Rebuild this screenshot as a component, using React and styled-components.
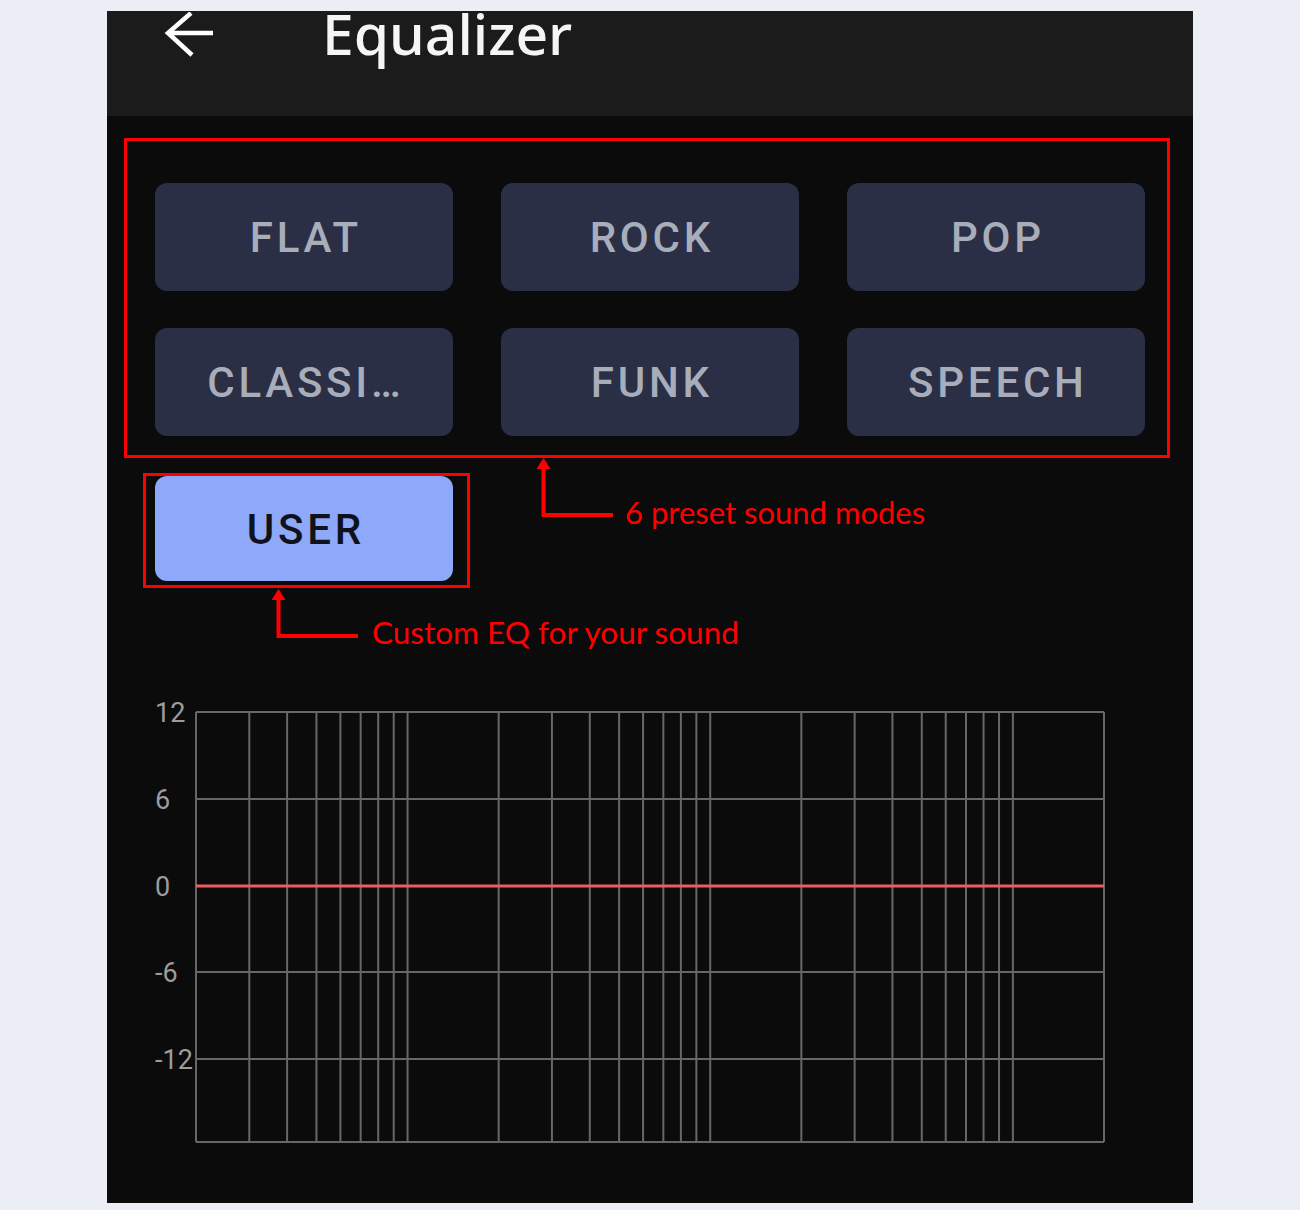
import React from "react";
import styled, { createGlobalStyle } from "styled-components";

const GlobalStyle = createGlobalStyle`
  html, body {
    margin: 0;
    background: #eceef6;
  }
  body {
    font-family: Roboto, "Noto Sans", sans-serif;
  }
`;

const presets = ["FLAT", "ROCK", "POP", "CLASSI…", "FUNK", "SPEECH"];

const Page = styled.div`
  padding: 11px 0 7px 107px;
`;

const Screen = styled.div`
  width: 1086px;
  height: 1192px;
  background: #0b0b0b;
  display: flex;
  flex-direction: column;
`;

const Header = styled.header`
  height: 105px;
  flex-shrink: 0;
  background: #1b1b1b;
  display: flex;
  align-items: flex-start;
  padding-left: 56px;
`;

const BackIcon = styled.svg`
  flex-shrink: 0;
  margin-top: 1px;
`;

const Title = styled.h1`
  margin: 0 0 0 107px;
  padding-bottom: 18px;
  font: 500 57px/44px "Noto Sans", Roboto, sans-serif;
  color: #f5f5f5;
`;

const PresetFrame = styled.div`
  box-sizing: border-box;
  width: 1046px;
  height: 320px;
  margin: 22px 0 0 17px;
  padding: 42px 22px 19px 28px;
  border: 3px solid #ff0000;
  display: grid;
  grid-template-columns: repeat(3, 298px);
  grid-template-rows: repeat(2, 108px);
  column-gap: 48px;
  row-gap: 37px;
`;

const ModeButton = styled.button`
  box-sizing: border-box;
  width: 298px;
  height: ${(p) => (p.$active ? "105px" : "108px")};
  border: none;
  border-radius: 12px;
  background: ${(p) => (p.$active ? "#8ea8fa" : "#2a2f45")};
  color: ${(p) => (p.$active ? "#0f121b" : "#a8adba")};
  font: 500 42px/1 Roboto, sans-serif;
  letter-spacing: 0.09em;
  padding: 2px 0 0 0.09em;
  display: flex;
  align-items: center;
  justify-content: center;
  white-space: nowrap;
`;

const UserRow = styled.div`
  height: 130px;
  flex-shrink: 0;
  display: flex;
  align-items: flex-start;
`;

const UserFrame = styled.div`
  box-sizing: border-box;
  width: 327px;
  height: 115px;
  margin: 15px 0 0 36px;
  padding: 0 0 0 9px;
  border: 3px solid #ff0000;
`;

const Note = styled.div`
  display: flex;
  align-items: flex-start;
  margin-left: ${(p) => p.$left}px;
`;

const NoteText = styled.span`
  margin: ${(p) => p.$top}px 0 0 ${(p) => p.$gap}px;
  font: 400 ${(p) => p.$size}px/37px Lato, "Noto Sans", sans-serif;
  color: #ff0000;
  white-space: nowrap;
`;

const CustomRow = styled.div`
  height: 100px;
  flex-shrink: 0;
  display: flex;
  align-items: flex-start;
`;

const ChartBox = styled.div`
  margin-left: 43px;
`;

const Elbow = ({ w, h, top = 0 }) => (
  <svg width={w} height={h} style={{ marginTop: top, flexShrink: 0 }}>
    <path
      d={`M7.5 9 V${h - 3} H${w}`}
      fill="none"
      stroke="#ff0000"
      strokeWidth="4"
    />
    <polygon points="7.5,0 0.5,11 14.5,11" fill="#ff0000" />
  </svg>
);

// chart is drawn 12px lower inside its svg so the top label has room
const L = 46;
const R = 954;
const T = 24;
const B = 454;
const steps = [1, 1.5, 2, 2.5, 3, 3.5, 4, 4.5, 5];
const xs = [];
[0, 1, 2].forEach((d) =>
  steps.forEach((m) => xs.push(L + ((d + Math.log10(m)) * (R - L)) / 3))
);
xs.push(R);
const levels = [
  { v: "12", y: 24 },
  { v: "6", y: 111 },
  { v: "0", y: 198 },
  { v: "-6", y: 284 },
  { v: "-12", y: 371 },
];

const Chart = () => (
  <svg width="960" height="464">
    {levels.map((l) => (
      <text
        key={l.v}
        x="5"
        y={l.y + 1}
        dominantBaseline="central"
        fontFamily="Roboto, sans-serif"
        fontSize="27"
        fill="#9c9c9c"
      >
        {l.v}
      </text>
    ))}
    <g stroke="#676767" strokeWidth="2">
      {xs.map((x, i) => (
        <line key={i} x1={x} x2={x} y1={T} y2={B} />
      ))}
      {levels.map((l) => (
        <line key={l.v} x1={L} x2={R} y1={l.y} y2={l.y} />
      ))}
      <line x1={L} x2={R} y1={B} y2={B} />
    </g>
    <line x1={L} x2={R} y1="198" y2="198" stroke="#e95e5e" strokeWidth="3" />
  </svg>
);

const App = () => {
  return (
    <Page>
      <GlobalStyle />
      <Screen>
        <Header>
          <BackIcon width="52" height="46" viewBox="0 0 52 46">
            <path
              d="M50 21 H6 M28 1 L5 21 L29 43"
              fill="none"
              stroke="#ffffff"
              strokeWidth="4.5"
              strokeLinejoin="miter"
            />
          </BackIcon>
          <Title>Equalizer</Title>
        </Header>

        <PresetFrame>
          {presets.map((name) => (
            <ModeButton key={name}>{name}</ModeButton>
          ))}
        </PresetFrame>

        <UserRow>
          <UserFrame>
            <ModeButton $active>USER</ModeButton>
          </UserFrame>
          <Note $left={66}>
            <Elbow w={77} h={60} />
            <NoteText $top={36} $gap={12} $size={31}>
              6 preset sound modes
            </NoteText>
          </Note>
        </UserRow>

        <CustomRow>
          <Note $left={164}>
            <Elbow w={87} h={50} top={1} />
            <NoteText $top={26} $gap={14} $size={31.5}>
              Custom EQ for your sound
            </NoteText>
          </Note>
        </CustomRow>

        <ChartBox>
          <Chart />
        </ChartBox>
      </Screen>
    </Page>
  );
};

export default App;
